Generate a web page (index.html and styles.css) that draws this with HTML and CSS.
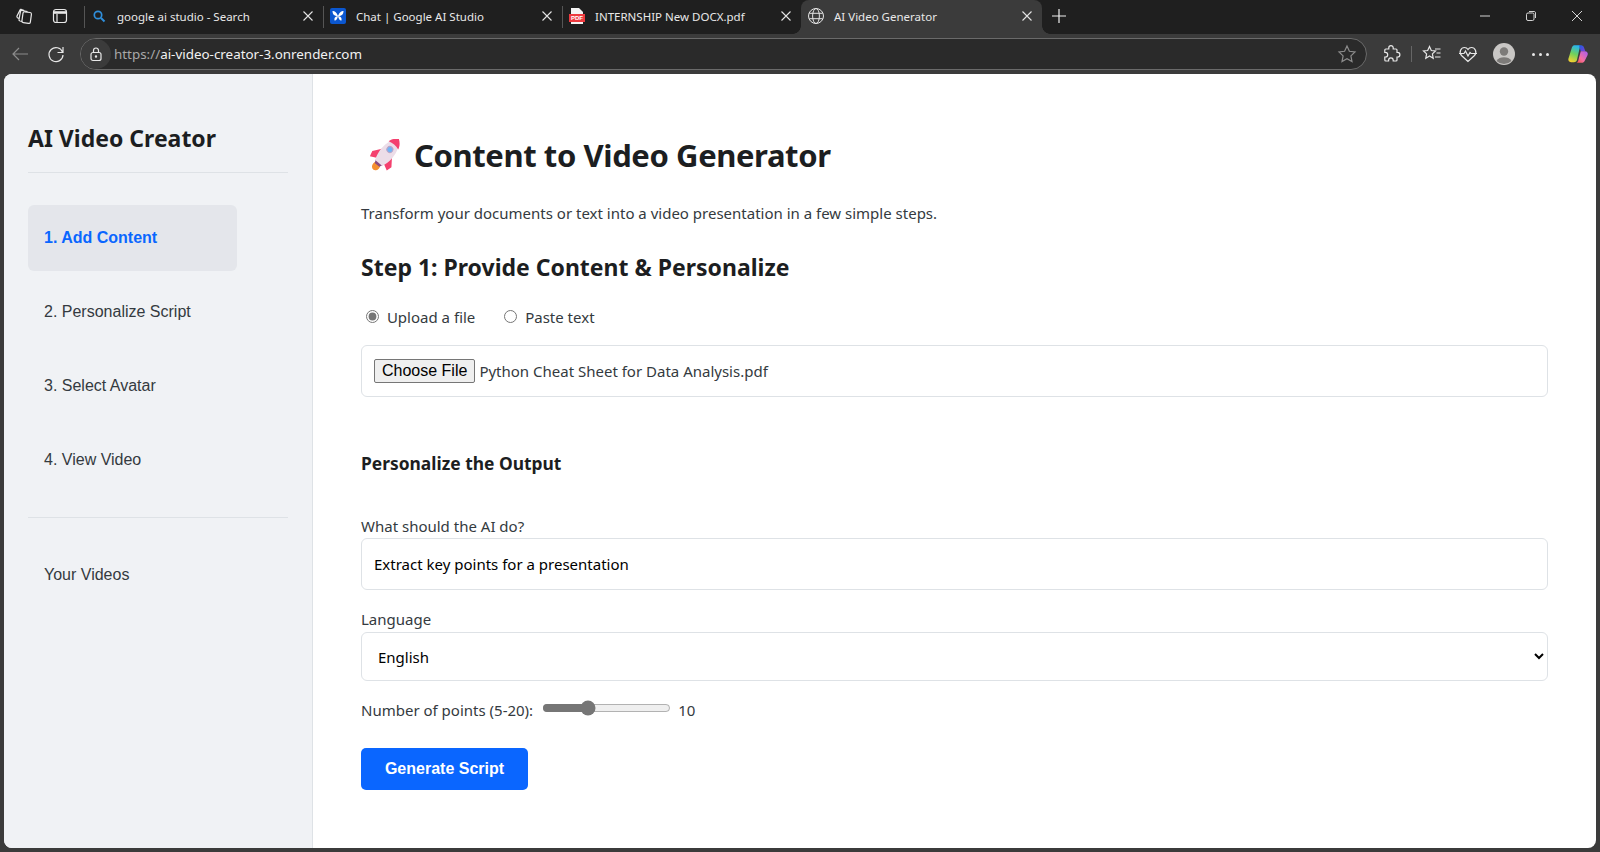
FILE: index.html
```html
<!DOCTYPE html>
<html lang="en">
<head>
    <meta charset="UTF-8">
    <meta name="viewport" content="width=device-width, initial-scale=1.0">
    <title>AI Video Generator</title>
    <link rel="stylesheet" href="styles.css">
</head>
<body>
    <!-- browser tabs -->
    <div class="tabstrip">
        <div class="strip-btns">
            <svg class="ico" viewBox="0 0 20 20"><rect x="8.500" y="6" width="8.500" height="11" rx="1.600" transform="rotate(8 12 11)"/><path d="M8.300 15.500L6 15c-.8-.2-1.200-.8-1-1.600L6.500 5.500c.2-.8.8-1.200 1.600-1L13.500 5.600M5 12.500L3.500 11.800c-.6-.4-.8-1-.5-1.700L6 4c.4-.7 1-.9 1.700-.5l2.500 1"/></svg>
            <svg class="ico tab-actions" viewBox="0 0 20 20"><rect x="3.500" y="3.500" width="13" height="13" rx="2.500"/><path d="M4 6.500h12" stroke-width="2.600"/><path d="M7 8v8"/></svg>
        </div>
        <div class="tab">
            <span class="fav"><svg viewBox="0 0 16 16"><circle cx="7" cy="7" r="3.700" fill="none" stroke="#2f8fdc" stroke-width="1.700"/><path d="M10 10l3.500 3.500" stroke="#2f8fdc" stroke-width="1.900"/></svg></span>
            <span class="tab-title">google ai studio - Search</span>
            <svg class="tab-x" viewBox="0 0 10 10"><path d="M.5.500l9 9M9.500.500l-9 9"/></svg>
        </div>
        <div class="tab">
            <span class="fav"><svg viewBox="0 0 16 16"><rect width="16" height="16" rx="2" fill="#0b57d0"/><path d="M8 8C6.500 4 4.500 3 2.500 3 2.500 6 4 8 8 8c-3 .500-4 2-3.500 4.500C6 13 7.500 11 8 8c.500 3 2 5 3.500 4.500C12 10 11 8.500 8 8c4 0 5.500-2 5.500-5-2 0-4 1-5.500 5z" fill="#fff"/></svg></span>
            <span class="tab-title">Chat | Google AI Studio</span>
            <svg class="tab-x" viewBox="0 0 10 10"><path d="M.5.500l9 9M9.500.500l-9 9"/></svg>
        </div>
        <div class="tab">
            <span class="fav"><svg viewBox="0 0 16 16"><path d="M2 0h8l4 4v12H2z" fill="#f4f4f4"/><rect y="6" width="16" height="8" fill="#ee3a3f"/><text x="8" y="12.300" class="pdf-mark">PDF</text></svg></span>
            <span class="tab-title">INTERNSHIP New DOCX.pdf</span>
            <svg class="tab-x" viewBox="0 0 10 10"><path d="M.5.500l9 9M9.500.500l-9 9"/></svg>
        </div>
        <div class="tab tab-active">
            <span class="fav"><svg viewBox="0 0 16 16" fill="none" stroke="#e4e4e4" stroke-width="1"><circle cx="8" cy="8" r="7.500"/><ellipse cx="8" cy="8" rx="3.400" ry="7.500"/><path d="M1.300 5.300h13.400M1.300 10.700h13.400"/></svg></span>
            <span class="tab-title">AI Video Generator</span>
            <svg class="tab-x" viewBox="0 0 10 10"><path d="M.5.500l9 9M9.500.500l-9 9"/></svg>
        </div>
        <svg class="newtab" viewBox="0 0 14 14"><path d="M7 0v14M0 7h14"/></svg>
        <div class="win-btns">
            <svg class="ico" viewBox="0 0 12 12"><path d="M1 6h10"/></svg>
            <svg class="ico" viewBox="0 0 12 12"><rect x="1.500" y="3" width="7.500" height="7.500" rx="1.500"/><path d="M4 1.500h5c1 0 1.500.500 1.500 1.500v5"/></svg>
            <svg class="ico" viewBox="0 0 12 12"><path d="M1 1l10 10M11 1L1 11"/></svg>
        </div>
    </div>

    <!-- address bar -->
    <div class="toolbar">
        <svg class="ico ico-dim" viewBox="0 0 20 20"><path d="M18 10H3M9 4l-6 6 6 6"/></svg>
        <svg class="ico" viewBox="0 0 20 20"><path d="M16.500 8A7 7 0 1 0 17 11M17 3v5.500h-5.500"/></svg>
        <div class="addressbar">
            <span class="lock"><svg class="ico" viewBox="0 0 16 16"><rect x="3" y="6.500" width="10" height="8" rx="2"/><path d="M5.500 6.500V4.500a2.500 2.500 0 0 1 5 0v2"/><circle cx="8" cy="10.500" r=".6"/></svg></span>
            <span class="url"><span class="url-dim">https://</span>ai-video-creator-3.onrender.com</span>
            <svg class="ico ico-dim star" viewBox="0 0 20 20"><path d="M10 2l2.400 5.300 5.600.700-4.100 3.900 1.100 5.700-5-2.900-5 2.900 1.100-5.700L2 8l5.600-.700z"/></svg>
        </div>
        <div class="tools">
            <svg class="ico" viewBox="0 0 20 20"><path d="M7.800 3.800a2.200 2.200 0 0 1 4.400 0V5h2.800c.6 0 1 .4 1 1v2.400h.6a2.300 2.300 0 0 1 0 4.600H16v3c0 .6-.4 1-1 1h-2.800v-.8a2.300 2.300 0 0 0-4.600 0v.8H4.800c-.6 0-1-.4-1-1v-3h.6a2.300 2.300 0 0 0 0-4.600h-.6V6c0-.6.4-1 1-1h3z"/></svg>
            <span class="tool-sep"></span>
            <svg class="ico" viewBox="0 0 20 20"><path d="M7.500 2.500l1.800 4 4.200.500-3.100 2.900.8 4.300-3.700-2.200-3.700 2.200.8-4.300L1.500 7l4.200-.500zM13 5h5.500M14.500 9H18.500M13 13h5.500"/></svg>
            <svg class="ico" viewBox="0 0 20 20"><path d="M10 17.500L3.500 11.500C.5 8 3 3.500 6.500 3.500c1.500 0 2.700.700 3.500 2 .8-1.300 2-2 3.500-2 3.500 0 6 4.500 3 8zM1 9.500h5l1.500-2.500 2.500 5 2-3.500 1 1h6"/></svg>
            <span class="avatar"><svg viewBox="0 0 22 22"><circle cx="11" cy="11" r="11" fill="#c9c7c5"/><circle cx="11" cy="8.500" r="4.200" fill="#7d7b79"/><path d="M3.500 18c1.500-3 4.500-3.800 7.500-3.800s6 .800 7.500 3.800a11 11 0 0 1-15 0z" fill="#7d7b79"/></svg></span>
            <span class="dots"><i></i><i></i><i></i></span>
            <svg class="copilot" viewBox="0 0 24 24">
                <defs>
                    <linearGradient id="cpA" x1="0.600" y1="0" x2="0.300" y2="1"><stop offset="0" stop-color="#27b4f0"/><stop offset=".5" stop-color="#6fd05c"/><stop offset="1" stop-color="#f7d12e"/></linearGradient>
                    <linearGradient id="cpB" x1="1" y1="0" x2="0" y2="1"><stop offset="0" stop-color="#a55cf0"/><stop offset=".6" stop-color="#f56fa0"/><stop offset="1" stop-color="#f0503c"/></linearGradient>
                    <linearGradient id="cpC" x1="0" y1="0" x2="1" y2="1"><stop offset="0" stop-color="#1a5fe0"/><stop offset="1" stop-color="#7a3fd8"/></linearGradient>
                </defs>
                <path d="M8 2.500h6.500L11 18c-.4 2-1.500 3-3.500 3H4.500C2 21 1 19 1.600 17L5 6c.5-2 1.500-3.500 3-3.500z" fill="url(#cpA)"/>
                <path d="M13 2.500h2.500c1.500 0 2.500 1 3 2.500l1.500 4h-5z" fill="url(#cpC)"/>
                <path d="M16 21.500H9.500c1.500 0 2.300-1 2.800-2.500L15 9h4.500C22 9 23.300 11 22.500 13l-3 6c-.6 1.500-2 2.500-3.500 2.500z" fill="url(#cpB)"/>
            </svg>
        </div>
    </div>

    <!-- the page itself -->
    <div class="page">
        <aside class="sidebar">
            <h2 class="brand">AI Video Creator</h2>
            <nav class="steps">
                <a class="step step-active">1. Add Content</a>
                <a class="step">2. Personalize Script</a>
                <a class="step">3. Select Avatar</a>
                <a class="step">4. View Video</a>
            </nav>
            <hr class="side-line">
            <a class="step">Your Videos</a>
        </aside>

        <main class="main">
            <h1 class="title">
                <svg class="rocket" viewBox="0 0 32 32">
                    <g transform="translate(19 14) rotate(40)">
                        <ellipse cx="0" cy="17" rx="3.800" ry="4.500" fill="#f59030"/>
                        <path d="M-6.500 0L-12.500 8-11 13.500-4 10zM6.500 0L12.500 8 11 13.500 4 10z" fill="#f4406e"/>
                        <path d="M-4.500 12H4.500L3 15.500H-3z" fill="#8a4a80"/>
                        <path d="M0-18.500C5-14 7.200-8 7.200 0 7.200 5 6 9.500 4.500 13h-9C-6 9.500-7.200 5-7.200 0-7.200-8-5-14 0-18.500z" fill="#ecdde8"/>
                        <path d="M0-18.500C3.500-16 5.500-13.500 6.300-10 2-11.500-2-11.500-6.300-10-5.500-13.500-3.500-16 0-18.500z" fill="#f4406e"/>
                        <circle cx="0" cy="-4.500" r="3" fill="#6fb5f5" stroke="#b9a3c8" stroke-width="1"/>
                    </g>
                </svg>
                <span>Content to Video Generator</span>
            </h1>
            <p class="intro">Transform your documents or text into a video presentation in a few simple steps.</p>

            <h2 class="step-title">Step 1: Provide Content &amp; Personalize</h2>
            <div class="radios">
                <label class="radio"><input type="radio" name="src" checked> Upload a file</label>
                <label class="radio"><input type="radio" name="src"> Paste text</label>
            </div>
            <div class="filebox">
                <button class="file-btn" type="button">Choose File</button>
                <span class="file-name">Python Cheat Sheet for Data Analysis.pdf</span>
            </div>

            <h3 class="sub-title">Personalize the Output</h3>

            <label class="field-label">What should the AI do?</label>
            <input class="field" type="text" value="Extract key points for a presentation">

            <label class="field-label lang-label">Language</label>
            <select class="field field-select">
                <option>English</option>
            </select>

            <div class="points">
                <label>Number of points (5-20):</label>
                <input class="range" type="range" min="5" max="20" value="10">
                <span>10</span>
            </div>

            <button class="primary" type="button">Generate Script</button>
        </main>
    </div>
</body>
</html>
```

FILE: styles.css
```css
*{
    box-sizing: border-box;
}

html, body{
    height: 100%;
}

body{
    margin: 0;
    display: flex;
    flex-direction: column;
    overflow: hidden;
    background-color: #3b3b3b;
    font-family: "Noto Sans", "Open Sans", sans-serif;
    color: #212529;
}

/* browser frame */
.ico{
    width: 20px;
    height: 20px;
    flex: none;
    fill: none;
    stroke: #e8e8e8;
    stroke-width: 1.2;
}

.ico-dim{
    stroke: #8c8c8c;
}

.tabstrip{
    height: 34px;
    flex: none;
    display: flex;
    background-color: #1f1f1f;
}

.strip-btns{
    width: 84px;
    flex: none;
    display: flex;
    align-items: center;
    gap: 16px;
    padding: 0 0 2px 14px;
}

.tab{
    width: 239px;
    flex: none;
    height: 34px;
    position: relative;
    display: flex;
    align-items: center;
    padding: 0 0 2px 7px;
    color: #e8e8e8;
    font-size: 11.5px;
}

.tab::before{
    content: "";
    position: absolute;
    left: 0;
    top: 6px;
    height: 22px;
    width: 1px;
    background-color: #555;
}

.tab-active{
    width: 241px;
    background-color: #3b3b3b;
    border-radius: 8px 8px 0 0;
}

/* inverse corners where the active tab meets the toolbar */
.tab-active::before,
.tab-active::after{
    content: "";
    position: absolute;
    display: block;
    top: auto;
    bottom: 0;
    width: 8px;
    height: 8px;
    background: radial-gradient(circle at 0 0, transparent 7.5px, #3b3b3b 8px);
}

.tab-active::before{
    left: -8px;
}

.tab-active::after{
    right: -8px;
    background: radial-gradient(circle at 100% 0, transparent 7.5px, #3b3b3b 8px);
}

.fav{
    width: 16px;
    height: 16px;
    flex: none;
    margin-right: 10px;
}

.fav svg{
    display: block;
    width: 16px;
    height: 16px;
}

.pdf-mark{
    font-family: "Liberation Sans", sans-serif;
    font-size: 6px;
    font-weight: bold;
    fill: #fff;
    text-anchor: middle;
}

.tab-title{
    flex: 1;
    white-space: nowrap;
}

.tab-x{
    width: 10px;
    height: 10px;
    margin-right: 10px;
    flex: none;
    fill: none;
    stroke: #e4e4e4;
    stroke-width: 1.1;
}

.newtab{
    width: 14px;
    height: 14px;
    margin: 9px 0 0 10px;
    flex: none;
    fill: none;
    stroke: #f0f0f0;
    stroke-width: 1.2;
}

.win-btns{
    margin-left: auto;
    display: flex;
    align-items: center;
    gap: 34px;
    padding: 0 17px 2px 0;
}

.win-btns .ico{
    width: 12px;
    height: 12px;
    stroke-width: .9;
}

.toolbar{
    height: 40px;
    flex: none;
    display: flex;
    align-items: center;
    padding: 0 0 0 10px;
    gap: 16px;
}

.addressbar{
    width: 1287px;
    height: 32px;
    margin-left: -2px;
    flex: none;
    display: flex;
    align-items: center;
    border: 1px solid #6a6a6a;
    border-radius: 16px;
    background-color: #2a2a2a;
}

.lock{
    width: 30px;
    height: 30px;
    flex: none;
    display: flex;
    align-items: center;
    justify-content: center;
    margin-right: 3px;
    border-radius: 50%;
    background-color: #3b3b3b;
}

.lock .ico{
    width: 16px;
    height: 16px;
}

.url{
    flex: 1;
    font-size: 13.4px;
    color: #f2f2f2;
}

.url-dim{
    color: #a8a8a8;
}

.star{
    margin-right: 9px;
}

.tools{
    flex: 1;
    display: flex;
    align-items: center;
    margin-left: -2px;
}

.tool-sep{
    width: 1px;
    height: 16px;
    margin: 0 10px;
    background-color: #666;
}

.tools .ico + .ico{
    margin-left: 16px;
}

.avatar{
    width: 22px;
    height: 22px;
    margin-left: 15px;
}

.avatar svg{
    display: block;
}

.dots{
    display: flex;
    gap: 4px;
    margin-left: 17px;
}

.dots i{
    width: 3px;
    height: 3px;
    border-radius: 50%;
    background-color: #e8e8e8;
}

.copilot{
    width: 22px;
    height: 22px;
    margin-left: 18px;
    flex: none;
}

/* page */
.page{
    flex: 1;
    min-height: 0;
    display: flex;
    margin: 0 4px 4px;
    background-color: #fff;
    border-radius: 8px;
    overflow: hidden;
}

.sidebar{
    width: 309px;
    flex: none;
    padding: 46px 24px 0;
    background-color: #f0f2f5;
    border-right: 1px solid #dee2e6;
    font-family: "Liberation Sans", sans-serif;
}

.brand{
    margin: 0;
    padding-bottom: 16px;
    font-family: "Noto Sans", sans-serif;
    font-size: 23px;
    line-height: 36px;
    color: #1c1e21;
    border-bottom: 1px solid #dee2e6;
}

.steps{
    display: flex;
    flex-direction: column;
    gap: 8px;
    margin-top: 32px;
}

.step{
    display: block;
    width: 209px;
    height: 66px;
    padding: 0 16px;
    line-height: 66px;
    font-size: 16px;
    color: #343a40;
    border-radius: 6px;
}

.step-active{
    background-color: #e4e6eb;
    color: #0a66ff;
    font-weight: bold;
}

.side-line{
    margin: 24px 0 24px;
    border: 0;
    border-top: 1px solid #dee2e6;
}

.main{
    flex: 1;
    padding: 48px 48px 0;
    font-size: 15px;
}

.title{
    margin: 0;
    display: flex;
    align-items: center;
    gap: 14px;
    height: 66px;
    font-size: 31px;
    letter-spacing: -.4px;
    color: #1c1e21;
}

.rocket{
    width: 32px;
    height: 32px;
    margin-left: 7px;
    flex: none;
}

.intro{
    margin: 15px 0 0;
    line-height: 20px;
    color: #343a40;
}

.step-title{
    margin: 26px 0 0;
    font-size: 23px;
    line-height: 36px;
    color: #1c1e21;
}

.radios{
    display: flex;
    gap: 29px;
    margin-top: 20px;
    padding-left: 5px;
    line-height: 24px;
    color: #343a40;
}

.radio input{
    margin: 0 4px 0 0;
    width: 13px;
    height: 13px;
    accent-color: #767676;
}

.filebox{
    height: 52px;
    margin-top: 16px;
    display: flex;
    align-items: center;
    padding: 0 12px;
    border: 1px solid #dee2e6;
    border-radius: 6px;
}

.file-btn{
    height: 24px;
    padding: 0 7px;
    font-family: "Liberation Sans", sans-serif;
    font-size: 16px;
    color: #000;
    background-color: #efefef;
    border: 1px solid #767676;
    border-radius: 2px;
}

.file-name{
    margin-left: 4px;
    color: #343a40;
}

.sub-title{
    margin: 54px 0 0;
    font-size: 17.4px;
    line-height: 24px;
    color: #1c1e21;
}

.field-label{
    display: block;
    line-height: 20px;
    color: #343a40;
    margin-top: 41px;
}

.lang-label{
    margin-top: 19px;
}

.field{
    display: block;
    width: 100%;
    height: 52px;
    margin-top: 2px;
    padding: 0 12px;
    font-family: inherit;
    font-size: 15px;
    color: #000;
    background-color: #fff;
    border: 1px solid #dee2e6;
    border-radius: 6px;
    outline: none;
}

.field-select{
    height: 49px;
    margin-top: 3px;
}

.points{
    display: flex;
    align-items: center;
    height: 24px;
    margin-top: 17px;
    color: #343a40;
}

.range{
    width: 129px;
    height: 16px;
    margin: 0 7px 4px 9px;
    accent-color: #767676;
}

.primary{
    display: block;
    width: 167px;
    height: 42px;
    margin-top: 26px;
    font-family: "Liberation Sans", sans-serif;
    font-size: 16px;
    font-weight: bold;
    color: #fff;
    background-color: #0a66ff;
    border: none;
    border-radius: 5px;
}
```
